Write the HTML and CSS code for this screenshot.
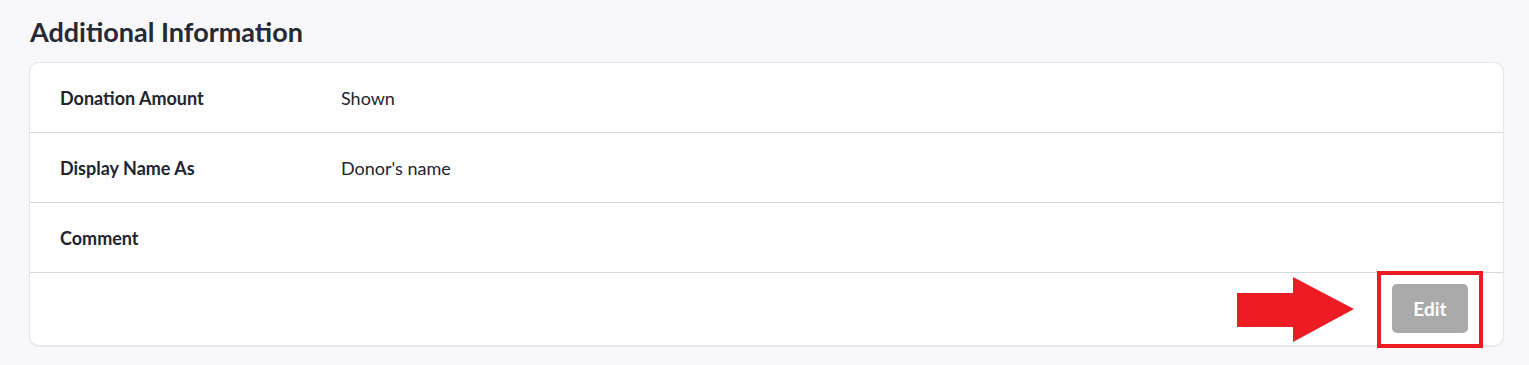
FILE: index.html
```html
<!DOCTYPE html>
<html lang="en">
<head>
    <meta charset="UTF-8">
    <title>Additional Information</title>
    <link rel="stylesheet" href="styles.css">
</head>
<body>
    <section class="section">
        <h2 class="section-title">Additional Information</h2>
        <div class="card">
            <div class="row">
                <div class="label">Donation Amount</div>
                <div class="value">Shown</div>
            </div>
            <div class="row">
                <div class="label">Display Name As</div>
                <div class="value">Donor's name</div>
            </div>
            <div class="row">
                <div class="label">Comment</div>
                <div class="value"></div>
            </div>
            <div class="card-footer">
                <div class="edit-wrap">
                    <svg class="arrow" width="118" height="66" viewBox="0 0 118 66">
                        <path d="M0 16 L56 16 L56 0 L117 32 L56 65 L56 50 L0 50 Z" fill="#ed1c24"/>
                    </svg>
                    <button class="btn-edit">Edit</button>
                    <span class="highlight"></span>
                </div>
            </div>
        </div>
    </section>
</body>
</html>
```

FILE: styles.css
```css
body {
    margin: 0;
    background: #f8f8fa;
    font-family: Lato, "Open Sans", sans-serif;
    color: #1f2330;
}

.section {
    padding: 15px 25px 20px 29px;
}

.section-title {
    margin: 0 0 13px 1px;
    font-size: 27px;
    font-weight: 700;
    line-height: 34px;
    color: #262a36;
}

.card {
    background: #fff;
    border: 1px solid #e3e5ea;
    border-radius: 10px;
    box-shadow: 0 1px 2px rgba(0, 0, 0, 0.06);
}

.row {
    display: flex;
    align-items: center;
    height: 69px;
    padding: 0 30px;
    border-bottom: 1px solid #d5d8e0;
}

.label {
    width: 281px;
    font-size: 18px;
    font-weight: 700;
    color: #22252e;
}

.value {
    font-size: 18px;
    color: #22252e;
}

.card-footer {
    display: flex;
    justify-content: flex-end;
    padding: 11px 35px 12px 30px;
}

.edit-wrap {
    position: relative;
}

.btn-edit {
    display: block;
    width: 76px;
    height: 49px;
    border: none;
    border-radius: 5px;
    background: #aaaaaa;
    color: #fff;
    font-family: Lato, "Open Sans", sans-serif;
    font-size: 19px;
    font-weight: 700;
}

.highlight {
    position: absolute;
    left: -15px;
    top: -13px;
    width: 98px;
    height: 69px;
    border: 4px solid #ed1c24;
}

.arrow {
    position: absolute;
    left: -155px;
    top: -7px;
}
```
